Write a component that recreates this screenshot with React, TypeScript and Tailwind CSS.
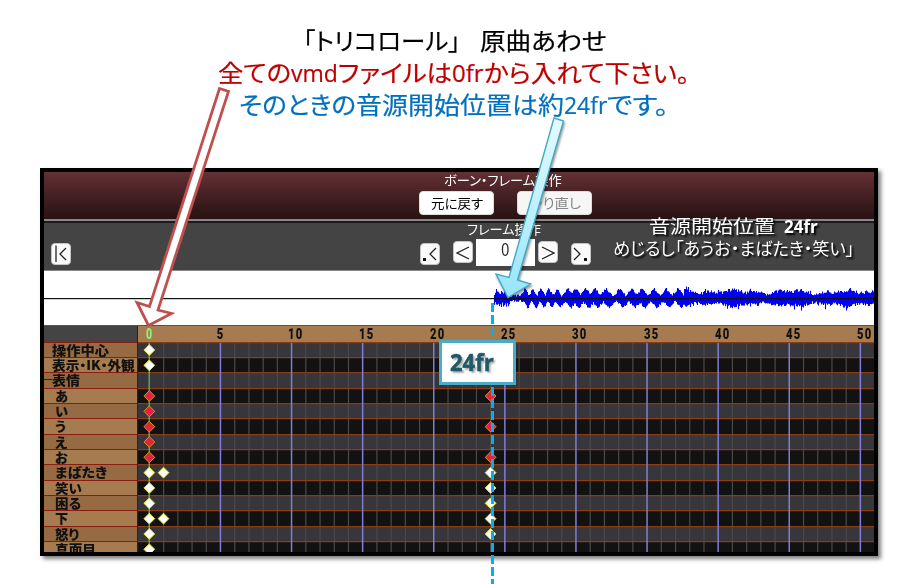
import { useLayoutEffect, useRef, useState } from 'react';
import type { ReactNode } from 'react';

const FONT = "font-['Open_Sans','Noto_Sans_CJK_JP',sans-serif]";
const JP = "font-['Noto_Sans_CJK_JP',sans-serif]";

// Squeezes or stretches one line of text to the width of its box.
function Fit({ className = '', children }: { className?: string; children: ReactNode }) {
  const box = useRef<HTMLSpanElement>(null);
  const ink = useRef<HTMLSpanElement>(null);
  const [scale, setScale] = useState(1);
  useLayoutEffect(() => {
    if (box.current && ink.current && ink.current.offsetWidth) {
      setScale(box.current.clientWidth / ink.current.offsetWidth);
    }
  }, [children]);
  return (
    <span ref={box} className={`block shrink-0 whitespace-nowrap ${className}`}>
      <span
        ref={ink}
        className="inline-block origin-left [font-feature-settings:'palt']"
        style={{ transform: `scaleX(${scale})` }}
      >
        {children}
      </span>
    </span>
  );
}

function Heading() {
  return (
    <header className={`h-[168px] pt-[25px] text-[24px] leading-[32px] [-webkit-text-stroke:0.2px_currentColor] ${FONT}`}>
      <div className="flex h-8 pl-[303px] text-black">
        <Fit className="w-[157px]">「トリコロール」</Fit>
        <Fit className="ml-5 w-[127px]">原曲あわせ</Fit>
      </div>
      <div className="flex h-8 pl-[218px] text-[#c00000]">
        <Fit className="w-[73px]">全ての</Fit>
        <Fit className="w-[47px]">vmd</Fit>
        <Fit className="w-[114px]">ファイルは</Fit>
        <Fit className="w-[32px]">0fr</Fit>
        <Fit className="w-[205px]">から入れて下さい。</Fit>
      </div>
      <div className="flex h-8 pl-[239px] text-[#0070c0]">
        <Fit className="w-[117px]">そのときの</Fit>
        <Fit className="w-[208px]">音源開始位置は約</Fit>
        <Fit className="w-[43px]">24fr</Fit>
        <Fit className="w-[62px]">です。</Fit>
      </div>
    </header>
  );
}

function Key({ className, d, dot }: { className: string; d: string; dot?: number }) {
  return (
    <div className={`h-[22px] w-5 shrink-0 rounded-[4px] border border-[#c4c4c4] bg-[#fbfbfb] ${className}`}>
      <svg viewBox="0 0 18 20" className="h-5 w-[18px]" fill="none" stroke="#222" strokeWidth="1.3">
        <path d={d} />
        {dot !== undefined && <rect x={dot} y="14" width="3" height="3" fill="#111" stroke="none" />}
      </svg>
    </div>
  );
}

function BoneBar() {
  return (
    <div className={`h-[47px] bg-linear-to-b from-[#633033] to-[#291213] ${JP}`}>
      <div className="flex h-[18px] pl-[400px] text-[13px] leading-[16px] text-white">
        <Fit className="w-[118px]">ボーン・フレーム操作</Fit>
      </div>
      <div className="flex gap-[23px] pl-[375px] text-[13px] leading-[22px]">
        <div className="mt-px flex h-6 w-[75px] justify-center rounded-[4px] border border-[#ddd] bg-white text-black">
          <Fit className="w-[52px]">元に戻す</Fit>
        </div>
        <div className="mt-px flex h-6 w-[75px] justify-center rounded-[4px] border border-[#ddd] bg-[#f6f6f6] text-[#888]">
          <Fit className="w-[52px]">やり直し</Fit>
        </div>
      </div>
    </div>
  );
}

function FrameBar() {
  return (
    <div className={`flex h-[52px] border-b border-t-2 border-b-[#888] border-t-[#888] bg-[#444] ${JP}`}>
      <div className="w-full border-t-2 border-[#1c1c1c]">
        <div className="flex h-full">
          <Key className="ml-[7px] mt-5" d="M4 1.5v16.5M14 4l-6 6 6 6" />
          <div className="ml-[347px] w-[175px]">
            <div className="flex h-4 pl-[49px] text-[13px] leading-[12px] text-white">
              <Fit className="w-[74px]">フレーム操作</Fit>
            </div>
            <div className="flex">
              <Key className="ml-[2px] mt-1" d="M15 4l-6 6 6 6" dot={2} />
              <Key className="ml-[13px] mt-[2px]" d="M15 5L3 11l12 6" />
              <div className="ml-[3px] flex h-[27px] w-[59px] justify-center bg-white text-[19px] leading-[21px] text-[#222]">
                <span className="block origin-center scale-x-75 font-['Liberation_Sans',sans-serif]">0</span>
              </div>
              <Key className="ml-[3px] mt-[2px]" d="M3 5l12 6-12 6" />
              <Key className="ml-[13px] mt-1" d="M2 4l6 6-6 6" dot={12} />
            </div>
          </div>
        </div>
      </div>
    </div>
  );
}

// Centres of the separate pulses that follow the attack, in pixels from its start.
const PULSES = [31, 39, 47, 55, 63, 74, 82, 92, 101, 112, 126, 138, 148, 160, 172, 184];

// Waveform strokes: a dense attack, then pulses that merge into a steady band.
const WAVE = (() => {
  let seed = 11;
  const rnd = () => ((seed = (seed * 16807) % 2147483647) / 2147483647);
  const pulse = (t: number, spread: number) =>
    Math.max(...PULSES.map((p) => Math.max(0, 1 - Math.abs(t - p) / spread)));
  let d = '';
  for (let x = 450.5; x < 830; x += 1) {
    const t = x - 450;
    let up: number;
    let down: number;
    if (t < 16) {
      up = 3 + rnd() * 7;
      down = 3 + rnd() * 6;
    } else if (t < 190) {
      const spread = t < 68 ? 4 : 6;
      up = 1 + pulse(t, spread) * 7.5 + rnd() * 2.4;
      down = 1 + pulse(t - 3, spread) * 7 + rnd() * 2.2;
    } else {
      const swell = Math.sin(t / 9) + Math.sin(t / 3.7);
      up = 4.2 + swell + rnd() * 3.6 + (rnd() > 0.92 ? 3 : 0);
      down = 3.8 + swell + rnd() * 3.8 + (rnd() > 0.92 ? 2.5 : 0);
    }
    d += `M${x} ${(27 - up).toFixed(1)}V${(28 + down).toFixed(1)}`;
  }
  return d;
})();

function Waveform() {
  return (
    <div className="h-[54px] bg-white">
      <svg width="830" height="54" viewBox="0 0 830 54" className="block">
        <path d={WAVE} stroke="#0000f5" strokeWidth="1.1" />
        <rect y="27" width="830" height="1.2" fill="#111" />
      </svg>
    </div>
  );
}

const STEP = 14.22;
const LABELS = ['操作中心', '表示・IK・外観', '表情', 'あ', 'い', 'う', 'え', 'お', 'まばたき', '笑い', '困る', '下', '怒り', '真面目'];
const LABEL_BOX = ['ml-[8px] w-[57px]', 'ml-[8px] w-[83px]', 'ml-[8px] w-[28px]', 'ml-[11px] w-[13px]', 'ml-[11px] w-[13px]', 'ml-[11px] w-[11px]', 'ml-[11px] w-[13px]', 'ml-[11px] w-[13px]', 'ml-[11px] w-[52px]', 'ml-[11px] w-[27px]', 'ml-[11px] w-[26px]', 'ml-[11px] w-[13px]', 'ml-[11px] w-[24px]', 'ml-[11px] w-[41px]'];
// Every third row is one pixel taller.
const rowHeight = (i: number) => (i % 3 === 2 ? 'h-4' : 'h-[15px]');
const KEYS: [number, number, boolean][] = [
  [0, 0, false], [1, 0, false], [3, 0, true], [4, 0, true], [5, 0, true], [6, 0, true], [7, 0, true],
  [8, 0, false], [8, 1, false], [9, 0, false], [10, 0, false], [11, 0, false], [11, 1, false], [12, 0, false], [13, 0, false],
  [3, 24, true], [5, 24, true], [7, 24, true], [8, 24, false], [9, 24, false], [10, 24, false], [11, 24, false], [12, 24, false],
];

function Ruler() {
  return (
    <div className="flex h-[17px] border-t border-[#555] bg-[#a67b50]">
      <div className="w-[94px] shrink-0 border-r border-[#222] bg-[#444]" />
      <div className="flex pl-[4.3px] font-['Roboto',sans-serif] text-[14px] font-black leading-[17px]">
        <span className="w-[37.7px] shrink-0 pl-[3px] text-[#90ee80]"><span className="inline-block scale-x-75">0</span></span>
        <span className="w-[71.1px] shrink-0 pl-[36px] text-[#111]">
          <span className="inline-block scale-x-[.8]">5</span>
        </span>
        {[10, 15, 20, 25, 30, 35, 40, 45, 50].map((n) => (
          <span key={n} className="w-[71.1px] shrink-0 pl-[37px] text-[#111]">
            <span className="inline-block origin-left scale-x-[.8] tracking-[1.5px]">{n}</span>
          </span>
        ))}
      </div>
    </div>
  );
}

function Timeline() {
  return (
    <div className="flex h-[210px] overflow-hidden">
      <div className={`w-[94px] shrink-0 border-r border-[#38201a] text-[13px] font-black leading-[14px] text-[#111] ${JP}`}>
        {LABELS.map((label, i) => (
          <div key={label} className={`flex border-t border-[#8a1c10] ${rowHeight(i)} ${i % 2 ? 'bg-[#a67b50]' : 'bg-[#966b43]'}`}>
            {i === 2 && <span className="mt-[6px] -mr-2 h-px w-2 shrink-0 bg-[#222]" />}
            <Fit className={LABEL_BOX[i]}>{label}</Fit>
          </div>
        ))}
      </div>
      <div className="relative w-[736px] overflow-hidden">
        {LABELS.map((label, i) => (
          <div key={label} className={rowHeight(i) + (i % 2 ? ' bg-[#121212]' : ' bg-[#37363a]')} />
        ))}
        <svg width="736" height="210" viewBox="0 0 736 210" className="absolute inset-0">
          {Array.from({ length: 51 }, (_, f) =>
            f % 5 ? <rect key={f} x={10.8 + f * STEP} width="1.2" height="210" fill="#4a4a4c" /> : null,
          )}
          {LABELS.map((label, i) => (
            <rect key={label} y={Math.floor(i * 15.34)} width="736" height="1.25" fill="#8b3c14" />
          ))}
          {Array.from({ length: 11 }, (_, n) => (
            <rect
              key={n}
              x={10.6 + n * 5 * STEP}
              y="1"
              width={n ? 1.5 : 1.1}
              height="210"
              fill={n ? '#7f7dd6' : '#6ccb70'}
            />
          ))}
          {KEYS.map(([row, f, red]) => {
            const x = 11.3 + f * STEP;
            const y = 8 + row * 15.33;
            return (
              <path
                key={`${row}-${f}`}
                d={`M${x} ${y - 5.4}l5.4 5.4-5.4 5.4-5.4-5.4z`}
                fill={red ? '#e52040' : '#fff'}
                stroke={red ? '#c8a010' : '#e0e030'}
                strokeWidth="1"
              />
            );
          })}
        </svg>
      </div>
    </div>
  );
}

function Annotations() {
  return (
    <>
      <div className="absolute left-[613px] top-[215px] text-white [text-shadow:2px_2px_2px_#000]">
        <div className={`flex h-[22px] pl-[36px] text-[18px] leading-[22px] ${FONT}`}>
          <Fit className="w-[126px]">音源開始位置</Fit>
          <Fit className="ml-[9px] w-[34px] font-bold">24fr</Fit>
        </div>
        <div className={`flex text-[17px] leading-[22px] ${JP}`}>
          <Fit className="w-[241px]">めじるし「あうお・まばたき・笑い」</Fit>
        </div>
      </div>
      <svg width="915" height="584" viewBox="0 0 915 584" className="absolute inset-0">
        <defs>
          <linearGradient id="ice" x1="0" y1="0" x2="0" y2="1">
            <stop offset="0" stopColor="#e4fbff" />
            <stop offset="1" stopColor="#98e5fb" />
          </linearGradient>
        </defs>
        <path d="M492.5 303V584" stroke="#00b0f0" strokeWidth="3" strokeDasharray="9 3" />
        <path d="M219.5 88.5L228.5 91.5L158 310L171.5 313.5L148.5 325.5L137 302.5L149.5 306.5Z" fill="#fff" stroke="#c0504d" strokeWidth="2.8" />
        <path d="M554 118L563.5 121L517.5 280L530.5 284L508 297.5L496 274L509 277.5Z" fill="url(#ice)" stroke="#46aac5" strokeWidth="1.4" className="drop-shadow-[1px_2px_1px_rgba(0,0,0,0.4)]" />
      </svg>
      <div className="absolute left-[439px] top-[340px] flex h-[45px] w-[77px] border-[3px] border-[#4bacc6] bg-white pl-[8px]">
        <Fit className={`w-[44px] text-[23px] font-bold leading-[39px] text-[#215968] [text-shadow:2px_2px_2px_#aaa] [-webkit-text-stroke:0.5px_currentColor] ${FONT}`}>24fr</Fit>
      </div>
    </>
  );
}

export default function App() {
  return (
    <div className="relative h-[584px] w-[915px] overflow-hidden bg-white">
      <Heading />
      <main className="ml-10 h-[388px] w-[838px] overflow-hidden border-4 border-black bg-black shadow-[3px_3px_4px_rgba(0,0,0,0.5)]">
        <BoneBar />
        <FrameBar />
        <Waveform />
        <Ruler />
        <Timeline />
      </main>
      <Annotations />
    </div>
  );
}
